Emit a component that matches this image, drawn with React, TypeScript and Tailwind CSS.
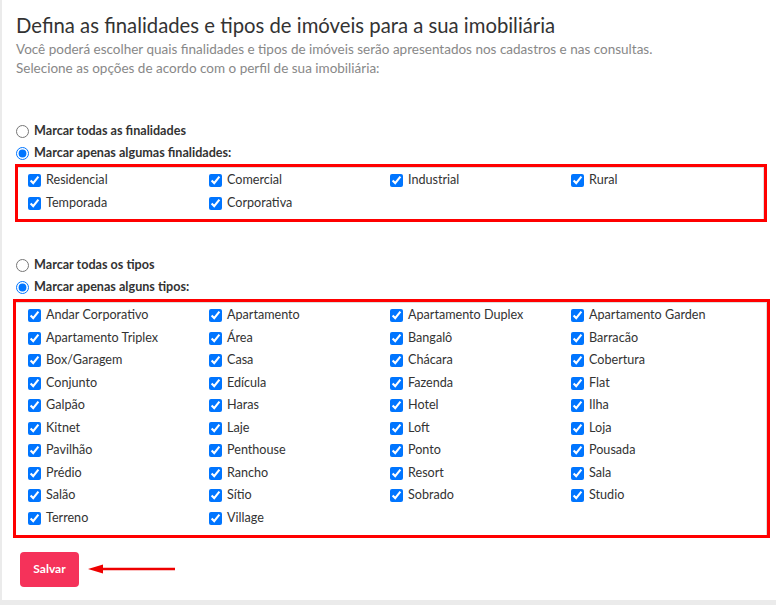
import React from "react";

const finalidades = ["Residencial", "Comercial", "Industrial", "Rural", "Temporada", "Corporativa"];

const tipos = [
  "Andar Corporativo", "Apartamento", "Apartamento Duplex", "Apartamento Garden",
  "Apartamento Triplex", "Área", "Bangalô", "Barracão",
  "Box/Garagem", "Casa", "Chácara", "Cobertura",
  "Conjunto", "Edícula", "Fazenda", "Flat",
  "Galpão", "Haras", "Hotel", "Ilha",
  "Kitnet", "Laje", "Loft", "Loja",
  "Pavilhão", "Penthouse", "Ponto", "Pousada",
  "Prédio", "Rancho", "Resort", "Sala",
  "Salão", "Sítio", "Sobrado", "Studio",
  "Terreno", "Village",
];

const CheckItem = ({ label }: { label: string }) => (
  <label className="flex items-center h-[22.5px] text-[12.6px] text-[#333]">
    <input type="checkbox" defaultChecked className="m-0 w-[13px] h-[13px]" />
    <span className="ml-[5px]">{label}</span>
  </label>
);

const RadioItem = ({ label, checked }: { label: string; checked?: boolean }) => (
  <label className="flex items-center h-[22px] text-[12.6px] font-bold text-[#333]">
    <input type="radio" defaultChecked={checked} name={label.includes("tipos") ? "tipos" : "fin"} className="m-0 w-[13px] h-[13px]" />
    <span className="ml-[5px]">{label}</span>
  </label>
);

export default function App() {
  return (
    <div className="w-[776px] h-[605px] bg-[#ebebeb] pl-[2px] overflow-hidden" style={{ fontFamily: "Lato, 'Noto Sans', sans-serif" }}>
      <div className="bg-white h-[600px] pl-[14px]">
        <h1 className="pt-[13px] text-[20.3px] leading-[24px] text-[#333]">
          Defina as finalidades e tipos de imóveis para a sua imobiliária
        </h1>
        <p className="mt-[3px] text-[13.5px] leading-[19px] text-[#888]">
          Você poderá escolher quais finalidades e tipos de imóveis serão apresentados nos cadastros e nas consultas.
          <br />
          Selecione as opções de acordo com o perfil de sua imobiliária:
        </p>

        {/* Finalidades */}
        <div className="mt-[42px]">
          <RadioItem label="Marcar todas as finalidades" />
          <RadioItem label="Marcar apenas algumas finalidades:" checked />
        </div>
        <div className="ml-[-1px] w-[752px] border-[3px] border-[#ff0000]">
          <div className="border-t border-r border-[#ddd] pl-[10px] pt-[1.5px] pb-[4px] grid grid-cols-[181px_181px_181px_181px]">
            {finalidades.map((f) => (
              <CheckItem key={f} label={f} />
            ))}
          </div>
        </div>

        {/* Tipos */}
        <div className="mt-[33px]">
          <RadioItem label="Marcar todas os tipos" />
          <RadioItem label="Marcar apenas alguns tipos:" checked />
        </div>
        <div className="ml-[-3px] w-[757px] border-[3px] border-[#ff0000]">
          <div className="border-t border-r border-[#ddd] pl-[12px] pt-[2px] pb-[5px] grid grid-cols-[181px_181px_181px_181px]">
            {tipos.map((t) => (
              <CheckItem key={t} label={t} />
            ))}
          </div>
        </div>

        <div className="flex items-center mt-[14px] ml-[4px]">
          <button className="w-[59px] h-[35px] rounded-[4px] bg-[#f5325a] text-white text-[12px] font-bold">
            Salvar
          </button>
          <svg width="90" height="12" viewBox="0 0 90 12" className="ml-[8px]">
            <line x1="10" y1="6" x2="88" y2="6" stroke="#ee0000" strokeWidth="2.5" />
            <polygon points="1,6 16,1.5 16,10.5" fill="#ee0000" />
          </svg>
        </div>
      </div>
    </div>
  );
}
